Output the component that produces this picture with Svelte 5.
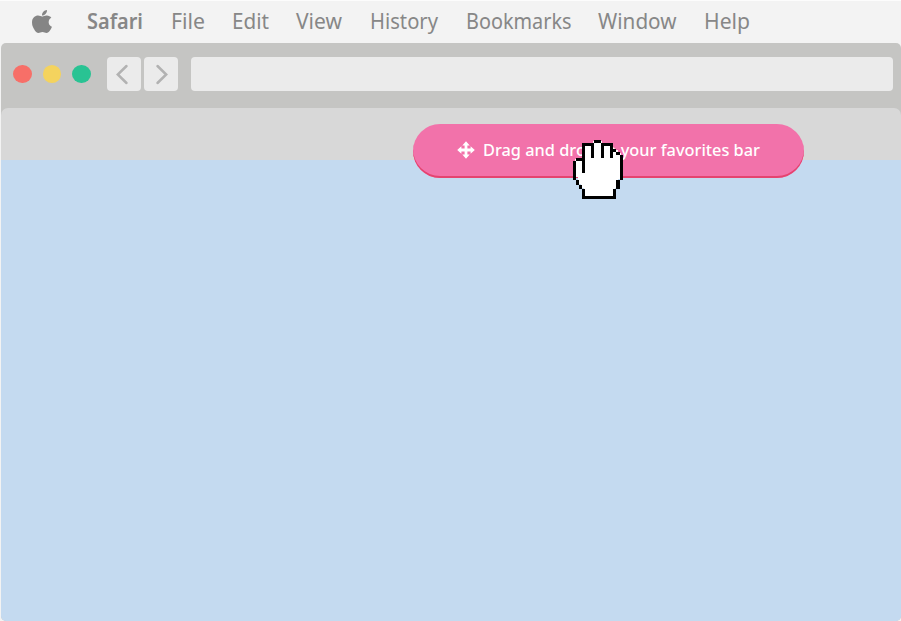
<script>
  const menus = [
    { name: 'Safari', left: 87, width: 56 },
    { name: 'File', left: 170.7, width: 34 },
    { name: 'Edit', left: 231.7, width: 37 },
    { name: 'View', left: 296, width: 46 },
    { name: 'History', left: 369.7, width: 68 },
    { name: 'Bookmarks', left: 465.7, width: 105.5 },
    { name: 'Window', left: 598, width: 78.5 },
    { name: 'Help', left: 703.7, width: 46 }
  ];
  const items = menus.map((m, i) => ({ ...m, gap: i ? m.left - menus[i - 1].left - menus[i - 1].width : 0 }));
</script>

<div class="screen">
  <header class="menubar">
    <svg class="apple" width="20" height="23" viewBox="4 32 377 448" preserveAspectRatio="none">
      <path d="M318.7 268.7c-.2-36.7 16.4-64.4 50-84.8-18.8-26.9-47.2-41.7-84.7-44.6-35.5-2.8-74.3 20.7-88.5 20.7-15 0-49.4-19.7-76.4-19.7C63.3 141.2 4 184.8 4 273.5q0 39.3 14.4 81.2c12.8 36.7 59 126.7 107.2 125.2 25.2-.6 43-17.9 75.8-17.9 31.8 0 48.3 17.9 76.4 17.9 48.6-.7 90.4-82.5 102.6-119.3-65.2-30.7-61.7-90-61.7-91.9zm-56.6-164.2c27.3-32.4 24.8-61.9 24-72.5-24.1 1.4-52 16.4-67.9 34.9-17.5 19.8-27.8 44.3-25.6 71.9 26.1 2 49.9-11.4 69.5-34.3z" />
    </svg>
    <nav>
      {#each items as item, i}
        <svg class="item" class:app={i === 0} width={item.width} height="42" style="margin-left: {item.gap}px">
          <text x="0" y="29" textLength={item.width} lengthAdjust="spacingAndGlyphs">{item.name}</text>
        </svg>
      {/each}
    </nav>
  </header>
  <section class="window">
    <div class="toolbar">
      <div class="lights"><i class="red"></i><i class="yellow"></i><i class="green"></i></div>
      <div class="nav">
        <span><svg width="34" height="34"><path d="M20.5 9l-8.700 8.500 8.700 8.500" /></svg></span>
        <span><svg width="34" height="34"><path d="M13.500 9l8.700 8.500-8.700 8.500" /></svg></span>
      </div>
      <div class="address"></div>
    </div>
    <div class="favorites"></div>
    <main></main>
  </section>
  <div class="pill">
    <svg class="move" width="18" height="18" viewBox="0 0 18 18"><path d="M9 .2l3.700 4.200h-2.300v3.200h3.200V5.300L17.800 9l-4.200 3.700v-2.300h-3.200v3.200h2.300L9 17.800l-3.700-4.200h2.300v-3.200H4.400v2.300L.2 9l4.200-3.700v2.300h3.200V4.400H5.300z" /></svg>
    <svg class="label" width="277" height="20"><text x="0" y="15" textLength="277" lengthAdjust="spacingAndGlyphs">Drag and drop to your favorites bar</text></svg>
  </div>
  <svg class="hand" width="50" height="59" viewBox="39 29 150 177" shape-rendering="crispEdges">
    <path fill="#fff" d="M72 42h27V33h28v9h29v18h18v9h10v77h-10v28h-10v28H72v-28H62v-14H53v-20H44V87h28z" />
    <path fill="#000" d="M103 29h20v9h-20zM67 38h36v45h-9V47H76v81h-9V92H48v-9h19zM123 38h37v18h9v9h-9v18h-9V47h-19v36h-9zM169 65h10v9h-10zM179 74h10v74h-10zM169 148h10v29h-10zM160 177h9v29H67v-29h9v20h84zM39 92h9v56h-9zM48 148h9v17h-9zM57 165h10v12H57z" />
  </svg>
</div>

<style>
  .screen { position: relative; width: 901px; height: 621px; background: #f3f3f3; overflow: hidden; display: flex; flex-direction: column; }
  .menubar { height: 43px; display: flex; align-items: flex-start; padding-left: 32px; border-top: 1px solid #fcfcfc; flex: none; box-sizing: border-box; }
  .apple { fill: #858585; margin: 8.5px 35px 0 0; }
  nav { display: flex; margin-top: -1px; }
  .item { font: 22px "Noto Sans", sans-serif; fill: #878787; overflow: visible; flex: none; }
  .app { font-weight: 600; }
  .window { flex: 1; display: flex; flex-direction: column; margin-left: 1px; background: #c5c5c3; border-radius: 5px; overflow: hidden; }
  .toolbar { height: 65px; display: flex; padding: 14px 8px 0 12px; box-sizing: border-box; flex: none; }
  .lights { display: flex; gap: 11px; padding-top: 8px; }
  i { width: 18.5px; height: 18px; border-radius: 50%; }
  .red { background: #f76f68; }
  .yellow { background: #f4d35e; }
  .green { background: #29c393; }
  .nav { display: flex; gap: 3px; margin: 0 13px 0 16px; }
  .nav span { width: 34px; height: 34px; background: #ebebeb; border-radius: 4px; }
  .nav path { fill: none; stroke: #b2b2b2; stroke-width: 2.5; stroke-linecap: round; }
  .nav span:first-child svg { margin-left: -0.5px; }
  .address { flex: 1; height: 34px; background: #ebebeb; border-radius: 4px; }
  .favorites { height: 52px; background: #d8d8d8; border-radius: 7px 7px 0 0; flex: none; }
  main { flex: 1; background: #c4daf0; }
  .pill { position: absolute; left: 413px; top: 124px; width: 391px; height: 54px; box-sizing: border-box; border-radius: 27px; background: #f272aa; box-shadow: inset 0 -2px #e54370; display: flex; padding: 17px 0 0 43.5px; }
  .pill svg { fill: #fff; flex: none; }
  .move { margin-right: 8.7px; }
  .label { font: 500 17px "Noto Sans", sans-serif; overflow: visible; }
  .hand { position: absolute; left: 573px; top: 140px; }
</style>
